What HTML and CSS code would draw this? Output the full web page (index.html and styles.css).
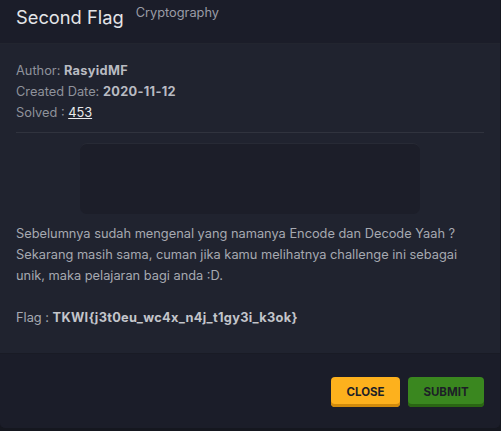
FILE: index.html
```html
<!DOCTYPE html>
<html>
<head>
<meta charset="utf-8">
<link rel="stylesheet" href="styles.css">
</head>
<body>
<div class="modal">
  <div class="modal-header">
    <h2 class="title">Second Flag</h2>
    <span class="category">Cryptography</span>
  </div>
  <div class="modal-body">
    <div class="meta">
      <div>Author: <b>RasyidMF</b></div>
      <div>Created Date: <b>2020-11-12</b></div>
      <div>Solved : <a href="#" class="solved">453</a></div>
    </div>
    <hr class="divider">
    <div class="media-box"></div>
    <p class="desc">Sebelumnya sudah mengenal yang namanya Encode dan Decode Yaah ?<br>Sekarang masih sama, cuman jika kamu melihatnya challenge ini sebagai unik, maka pelajaran bagi anda :D.<br><br>Flag : <b>TKWI{j3t0eu_wc4x_n4j_t1gy3i_k3ok}</b></p>
  </div>
  <div class="modal-footer">
    <button class="btn btn-close">CLOSE</button>
    <button class="btn btn-submit">SUBMIT</button>
  </div>
</div>
</body>
</html>
```
FILE: styles.css
```css
html, body {
  margin: 0;
  padding: 0;
  background: #15171f;
  height: 100%;
  overflow: hidden;
}
body {
  font-family: Inter, Roboto, sans-serif;
}
.modal {
  width: 500px;
  height: 428px;
  display: flex;
  flex-direction: column;
  background: #1b1d29;
  border-radius: 0 0 5px 5px;
  overflow: hidden;
}
.modal-header {
  height: 43px;
  box-sizing: border-box;
  display: flex;
  align-items: flex-start;
  padding: 5px 16px 0;
  background: #1b1d29;
}
.title {
  margin: 0;
  font-size: 18.3px;
  font-weight: 400;
  color: #e4e5e8;
  line-height: 24px;
}
.category {
  margin-left: 12px;
  font-size: 12.8px;
  color: #9a9ca6;
  line-height: 14px;
  margin-top: 1px;
}
.modal-body {
  background: #20232f;
  padding: 16px 16px 25px;
  border-top: 1px solid #22252f;
}
.meta {
  font-size: 12.8px;
  line-height: 21px;
  color: #8f929b;
}
.meta b {
  color: #b9bbc2;
  font-weight: 700;
  letter-spacing: 0.3px;
}
.solved {
  color: #e8e9ec;
}
.divider {
  border: 0;
  border-top: 1px solid #30333e;
  margin: 9px 0 10px;
}
.media-box {
  width: 340px;
  height: 71px;
  margin: 0 auto;
  background: #1c1e29;
  border-top: 1px solid #272a35;
  border-radius: 7px;
  box-sizing: border-box;
}
.desc {
  margin: 9px 0 0;
  font-size: 12.8px;
  line-height: 21px;
  color: #a6a9b1;
}
.desc b {
  color: #c3c5cb;
  letter-spacing: 0.3px;
}
.modal-footer {
  flex: 1;
  display: flex;
  justify-content: flex-end;
  align-items: flex-start;
  gap: 8px;
  padding: 23px 16px 0;
  background: #1b1d29;
  border-top: 1px solid #191b25;
}
.btn {
  border: 0;
  border-radius: 4px;
  height: 30px;
  font-family: Inter, Roboto, sans-serif;
  font-weight: 700;
  font-size: 11.5px;
  color: #1d1f27;
  padding: 0;
}
.btn-close {
  width: 69px;
  background: #fdb11d;
  box-shadow: inset 0 -3px 0 #d18a0b;
}
.btn-submit {
  width: 76px;
  background: #3a871f;
  box-shadow: inset 0 -3px 0 #2a6513;
}
```
